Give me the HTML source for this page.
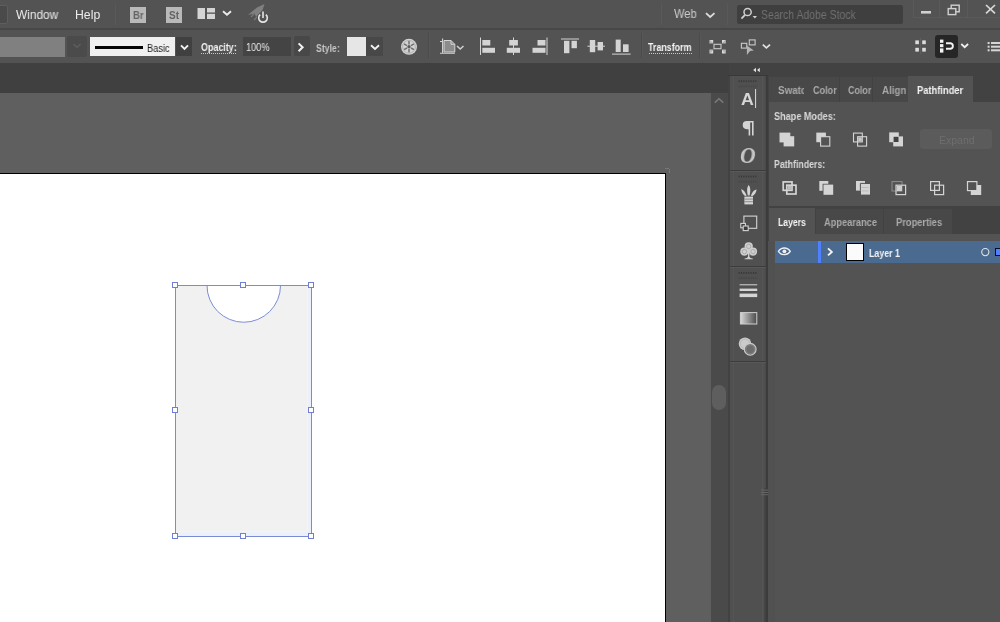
<!DOCTYPE html>
<html lang="en">
<head>
<meta charset="utf-8">
<title>Illustrator workspace</title>
<style>
html,body{margin:0;padding:0;}
body{width:1000px;height:622px;overflow:hidden;background:#535353;position:relative;
  font-family:"Liberation Sans",sans-serif;color:#ddd;}
.abs{position:absolute;}
.t{position:absolute;white-space:nowrap;line-height:1;transform-origin:0 0;will-change:transform;-webkit-font-smoothing:antialiased;}
#ico{position:absolute;left:0;top:0;width:1000px;height:622px;}
/* layout blocks */
#menubar{left:0;top:0;width:1000px;height:28px;background:#535353;}
#menusep{left:0;top:28px;width:1000px;height:2px;background:#474747;}
#ctrlbar{left:0;top:30px;width:1000px;height:33px;background:#535353;}
#darkstrip{left:0;top:63px;width:1000px;height:30px;background:#404040;}
#canvas{left:0;top:93px;width:711px;height:529px;background:#5f5f5f;}
#artboard{left:0;top:173px;width:665px;height:449px;background:#fff;border-top:1px solid #000;border-right:1px solid #000;box-sizing:content-box;}
#vscroll{left:711px;top:93px;width:18px;height:529px;background:#4a4a4a;}
#vthumb{left:712px;top:385px;width:14px;height:25px;background:#5e5e5e;border-radius:7px;}
#dockcol{left:729px;top:63px;width:271px;height:559px;background:#424242;}
#dock{left:729px;top:76px;width:38px;height:546px;background:#505050;}
#panelA{left:769px;top:76px;width:231px;height:130px;background:#535353;}
#panelB{left:769px;top:208px;width:231px;height:414px;background:#535353;}
</style>
</head>
<body>
<div class="abs" id="menubar"></div>
<div class="abs" id="menusep"></div>
<div class="abs" id="ctrlbar"></div>
<div class="abs" id="darkstrip"></div>
<div class="abs" id="canvas"></div>
<div class="abs" id="artboard"></div>
<div class="abs" id="vscroll"></div>
<div class="abs" id="vthumb"></div>
<div class="abs" id="dockcol"></div>
<div class="abs" id="dock"></div>
<div class="abs" id="panelA"></div>
<div class="abs" id="panelB"></div>

<!-- menu bar bits -->
<div class="abs" style="left:-10px;top:5px;width:16px;height:17px;background:#4a4a4a;border:1px solid #5e5e5e;border-radius:2px;"></div>
<div class="abs" style="left:115px;top:3px;width:1px;height:22px;background:#595959;"></div>
<div class="abs" style="left:130px;top:7px;width:16px;height:16px;background:#b9b9b9;"></div>
<div class="abs" style="left:166px;top:7px;width:16px;height:16px;background:#b9b9b9;"></div>
<div class="abs" style="left:661px;top:3px;width:1px;height:22px;background:#595959;"></div>
<div class="abs" style="left:727px;top:3px;width:1px;height:22px;background:#595959;"></div>
<div class="abs" style="left:737px;top:5px;width:166px;height:19px;background:#3f3f3f;border-radius:2px;"></div>
<!-- window buttons frame -->
<div class="abs" style="left:913px;top:-2px;width:90px;height:18px;border:1px solid #5a5a5a;"></div>
<div class="abs" style="left:939px;top:0;width:1px;height:17px;background:#5a5a5a;"></div>
<div class="abs" style="left:967px;top:0;width:1px;height:17px;background:#5a5a5a;"></div>
<!-- control bar bits -->
<div class="abs" style="left:0;top:37px;width:65px;height:20px;background:#808080;"></div>
<div class="abs" style="left:67px;top:36px;width:20px;height:21px;background:#4b4b4b;border-radius:2px;"></div>
<div class="abs" style="left:90px;top:37px;width:85px;height:19px;background:#f0f0f0;"></div>
<div class="abs" style="left:95px;top:45.5px;width:48px;height:3px;background:#050505;"></div>
<div class="abs" style="left:176px;top:37px;width:16px;height:19px;background:#404040;"></div>
<div class="abs" style="left:243px;top:37px;width:48px;height:19px;background:#444444;"></div>
<div class="abs" style="left:294px;top:36px;width:16px;height:20px;background:#484848;border-radius:2px;"></div>
<div class="abs" style="left:347px;top:37px;width:19px;height:19px;background:#e6e6e6;"></div>
<div class="abs" style="left:366px;top:37px;width:17px;height:19px;background:#484848;"></div>
<div class="abs" style="left:428px;top:33px;width:1px;height:25px;background:#4b4b4b;"></div>
<div class="abs" style="left:429px;top:33px;width:1px;height:25px;background:#575757;"></div>
<div class="abs" style="left:641px;top:33px;width:1px;height:25px;background:#4b4b4b;"></div>
<div class="abs" style="left:642px;top:33px;width:1px;height:25px;background:#575757;"></div>
<div class="abs" style="left:699px;top:33px;width:1px;height:25px;background:#4b4b4b;"></div>
<div class="abs" style="left:700px;top:33px;width:1px;height:25px;background:#575757;"></div>
<div class="abs" style="left:935px;top:35px;width:23px;height:22.5px;background:#262626;border-radius:3px;"></div>
<!-- dock -->
<div class="abs" style="left:728px;top:75px;width:40px;height:1px;background:#383838;"></div>
<div class="abs" style="left:728px;top:76px;width:1.5px;height:546px;background:#424242;"></div><div class="abs" style="left:732.5px;top:76px;width:1px;height:546px;background:#555555;"></div><div class="abs" style="left:761.5px;top:76px;width:1px;height:546px;background:#555555;"></div>
<div class="abs" style="left:765px;top:76px;width:1px;height:546px;background:#4a4a4a;"></div>
<div class="abs" style="left:766px;top:76px;width:2px;height:546px;background:#3c3c3c;"></div>
<div class="abs" style="left:730px;top:170px;width:36px;height:1px;background:#3c3c3c;"></div>
<div class="abs" style="left:730px;top:171px;width:36px;height:1px;background:#585858;"></div>
<div class="abs" style="left:730px;top:266px;width:36px;height:1px;background:#3c3c3c;"></div>
<div class="abs" style="left:730px;top:267px;width:36px;height:1px;background:#585858;"></div>
<div class="abs" style="left:730px;top:361px;width:36px;height:1px;background:#3c3c3c;"></div>
<div class="abs" style="left:730px;top:362px;width:36px;height:1px;background:#585858;"></div>
<!-- panel A tabs -->
<div class="abs" style="left:769px;top:76px;width:231px;height:26px;background:#424242;"></div>
<div class="abs" style="left:769px;top:77px;width:70px;height:25px;background:#484848;"></div>
<div class="abs" style="left:840px;top:77px;width:32px;height:25px;background:#484848;"></div>
<div class="abs" style="left:873px;top:77px;width:35px;height:25px;background:#484848;"></div>
<div class="abs" style="left:908px;top:76px;width:65px;height:27px;background:#535353;"></div>
<div class="abs" style="left:920px;top:129px;width:72px;height:20px;background:#5b5b5b;border-radius:3px;"></div>
<!-- panel B tabs -->
<div class="abs" style="left:769px;top:208px;width:231px;height:26px;background:#424242;"></div>
<div class="abs" style="left:769px;top:208px;width:46px;height:27px;background:#535353;"></div>
<div class="abs" style="left:816px;top:209px;width:67px;height:25px;background:#484848;"></div>
<div class="abs" style="left:884px;top:209px;width:68px;height:25px;background:#484848;"></div>
<div class="abs" style="left:768px;top:241px;width:7px;height:381px;background:#515151;"></div>
<!-- layer row -->
<div class="abs" style="left:775px;top:241px;width:225px;height:22px;background:#4a6a8f;"></div>
<div class="abs" style="left:817.5px;top:241px;width:3px;height:22px;background:#4f80ff;"></div>
<div class="abs" style="left:846px;top:243px;width:16px;height:16px;background:#fbfbfb;border:1px solid #000;"></div>
<div class="abs" style="left:994.5px;top:248px;width:8px;height:6px;background:#4f80ff;border:1px solid #0a0a2a;"></div>
<!--BLOCKS-->
<svg id="ico" viewBox="0 0 1000 622" width="1000" height="622">

<!-- ===== canvas shape ===== -->
<path d="M176 286 H207 A36.75 36.75 0 0 0 280.5 286 H307.5 V531.5 H176 Z" fill="#f1f1f1"/>
<rect x="307.5" y="286" width="3.5" height="250" fill="#ecf0fa"/>
<rect x="176" y="531.5" width="135" height="4.5" fill="#ecf0fa"/>
<path d="M207 285.5 A36.75 36.75 0 0 0 280.5 285.5" fill="none" stroke="#7b8ad4" stroke-width="1"/>
<rect x="175.5" y="285.5" width="136" height="251" fill="none" stroke="#7b8ad4" stroke-width="1"/>
<g fill="#fff" stroke="#6f80d4" stroke-width="1">
<rect x="172.5" y="282.5" width="5" height="5"/><rect x="240.5" y="282.5" width="5" height="5"/><rect x="308.5" y="282.5" width="5" height="5"/>
<rect x="172.5" y="407.5" width="5" height="5"/><rect x="308.5" y="407.5" width="5" height="5"/>
<rect x="172.5" y="533.5" width="5" height="5"/><rect x="240.5" y="533.5" width="5" height="5"/><rect x="308.5" y="533.5" width="5" height="5"/>
</g>
<!-- artboard corner tick -->
<path d="M665 168.5 h4 M669.5 169 v4" stroke="#777" stroke-width="1" fill="none"/>

<!-- ===== menu bar icons ===== -->
<g fill="#d4d4d4">
<rect x="197.5" y="8" width="7.5" height="11"/><rect x="207" y="8" width="8" height="4.5"/><rect x="207" y="13.8" width="8" height="5.2"/>
</g>
<polyline points="223,11.3 227,14.8 231,11.3" fill="none" stroke="#ececec" stroke-width="1.9"/>
<!-- gpu rocket -->
<path d="M248 15 L257 7.5 L264.5 4 L262.5 10 L256 17 L254.5 13.5 Z" fill="#808080"/>
<path d="M251 17 l3 -3 M254 20 l3 -3" stroke="#7a7a7a" stroke-width="1.2"/>
<circle cx="263" cy="18" r="5.6" fill="#535353"/>
<path d="M260.2 14.6 A4.3 4.3 0 1 0 265.8 14.6" fill="none" stroke="#e6e6e6" stroke-width="1.6"/>
<line x1="263" y1="11.5" x2="263" y2="18" stroke="#e6e6e6" stroke-width="1.6"/>
<!-- web chevron -->
<polyline points="706,13.2 710.2,17 714.5,13.2" fill="none" stroke="#dcdcdc" stroke-width="1.8"/>
<!-- search magnifier -->
<circle cx="747.6" cy="12" r="3.6" fill="none" stroke="#d0d0d0" stroke-width="1.5"/>
<line x1="745" y1="14.8" x2="741.5" y2="18.6" stroke="#d0d0d0" stroke-width="1.8"/>
<path d="M752.6 16 h4.4 l-2.2 2.4 z" fill="#d0d0d0"/>
<!-- window controls -->
<rect x="921" y="11" width="10" height="2.6" fill="#d0d0d0"/>
<rect x="951.2" y="5.2" width="8" height="6.6" fill="none" stroke="#d0d0d0" stroke-width="1.4"/>
<rect x="948.2" y="8.6" width="7.6" height="6" fill="#535353" stroke="#d0d0d0" stroke-width="1.4"/>
<path d="M986 5 l9 8.4 M995 5 l-9 8.4" stroke="#d8d8d8" stroke-width="1.7"/>

<!-- ===== control bar icons ===== -->
<polyline points="73.5,44 77,47.3 80.5,44" fill="none" stroke="#5c5c5c" stroke-width="1.6"/>
<polyline points="181,45.4 184.5,48.9 188,45.4" fill="none" stroke="#f2f2f2" stroke-width="1.9"/>
<polyline points="298.6,43.4 302.6,47.3 298.6,51.2" fill="none" stroke="#f2f2f2" stroke-width="2"/>
<polyline points="371,45.3 375,48.9 379,45.3" fill="none" stroke="#f2f2f2" stroke-width="1.9"/>
<!-- recolor wheel -->
<circle cx="409" cy="46.8" r="8" fill="#d2d2d2"/>
<g stroke="#707070" stroke-width="1.5">
<line x1="409" y1="41" x2="409" y2="44.5"/><line x1="409" y1="49" x2="409" y2="52.6"/>
<line x1="404" y1="43.9" x2="407" y2="45.6"/><line x1="411" y1="48" x2="414" y2="49.7"/>
<line x1="404" y1="49.7" x2="407" y2="48"/><line x1="411" y1="45.6" x2="414" y2="43.9"/>
</g>
<circle cx="409" cy="46.8" r="1.7" fill="#5a5a5a"/>
<circle cx="409" cy="46.8" r="6.4" fill="none" stroke="#a8a8a8" stroke-width="0.8"/>
<!-- document setup -->
<path d="M442.6 38.4 V53.2 M440 53.2 H455 M440 41.5 H442.5" stroke="#d4d4d4" stroke-width="1.1" fill="none"/>
<path d="M444 40.5 H451 L454.8 44.3 V52 H444 Z" fill="#8c8c8c" stroke="#d4d4d4" stroke-width="1"/>
<path d="M451 40.5 V44.3 H454.8" fill="none" stroke="#d4d4d4" stroke-width="1"/>
<polyline points="457,46 460.2,49 463.5,46" fill="none" stroke="#cfcfcf" stroke-width="1.6"/>
<!-- align icons -->
<g fill="#d4d4d4">
<rect x="480" y="37.5" width="1" height="17.5"/><rect x="482.3" y="40" width="8" height="5.5"/><rect x="482.3" y="47.8" width="12.7" height="5"/>
<rect x="513" y="37.5" width="1" height="17.5"/><rect x="509.2" y="40" width="8.7" height="5.5"/><rect x="506.8" y="47.8" width="13.2" height="5"/>
<rect x="546.5" y="37.5" width="1" height="17.5"/><rect x="537.5" y="40" width="8" height="5.5"/><rect x="532.5" y="47.8" width="13" height="5"/>
<rect x="561" y="38.5" width="18" height="1"/><rect x="564" y="40.8" width="5.4" height="12.4"/><rect x="571.5" y="40.8" width="5.4" height="7.4"/>
<rect x="587.4" y="45.7" width="17.6" height="1"/><rect x="589.8" y="40" width="5.4" height="12.2"/><rect x="597.6" y="42" width="5.4" height="8.4"/>
<rect x="612" y="53.6" width="18.6" height="1"/><rect x="615.7" y="39.6" width="5" height="12.4"/><rect x="623" y="44.3" width="5.6" height="7.7"/>
</g>
<!-- isolate icon -->
<rect x="714" y="44.3" width="7" height="4.4" fill="none" stroke="#cacaca" stroke-width="1.1"/>
<g fill="#dadada">
<path d="M709.4 40 h3.8 v3.6 z"/><path d="M725.8 40 h-3.8 v3.6 z"/>
<path d="M709.4 53.4 h3.8 v-3.8 z"/><path d="M725.8 53.4 h-3.8 v-3.8 z"/>
<path d="M709.4 40 v3.6 h3.8 z" opacity=".75"/><path d="M725.8 40 v3.6 h-3.8 z" opacity=".75"/>
<path d="M709.4 53.4 v-3.8 h3.8 z" opacity=".75"/><path d="M725.8 53.4 v-3.8 h-3.8 z" opacity=".75"/>
</g>
<!-- select similar -->
<rect x="741.4" y="43.3" width="5.4" height="4.8" fill="none" stroke="#cacaca" stroke-width="1.1"/>
<rect x="749.3" y="39.9" width="5.8" height="5" fill="none" stroke="#cacaca" stroke-width="1.1"/>
<path d="M746.9 45.4 L753.8 50.4 L750 51 L746.9 55 Z" fill="#b4b4b4"/>
<polyline points="762.8,44.6 766.4,47.8 770,44.6" fill="none" stroke="#e0e0e0" stroke-width="1.8"/>
<!-- grid icon -->
<g fill="#dcdcdc"><rect x="915.3" y="40.4" width="3.6" height="3.8"/><rect x="922.2" y="40.4" width="3.6" height="3.8"/>
<rect x="915.3" y="47.8" width="3.6" height="3.8"/><rect x="922.2" y="47.8" width="3.6" height="3.8"/></g>
<rect x="920" y="38" width="1" height="16" fill="#5e5e5e"/>
<!-- snap button contents -->
<g fill="#f4f4f4"><rect x="940" y="39.6" width="3.4" height="3.2"/><rect x="940" y="44.1" width="3.4" height="3.1"/><rect x="940" y="48.4" width="3.4" height="4.2"/></g>
<path d="M946 43.3 H950.6 A2.8 2.8 0 0 1 950.6 48.8 H946" fill="none" stroke="#f4f4f4" stroke-width="1.9"/>
<polyline points="961.3,44 964.7,47.2 968.1,44" fill="none" stroke="#f0f0f0" stroke-width="1.8"/>
<!-- list icon -->
<g fill="#d6d6d6"><rect x="987.6" y="42" width="2" height="2"/><rect x="987.6" y="45.7" width="2" height="2"/><rect x="987.6" y="49.3" width="2" height="2"/>
<rect x="991" y="42" width="9" height="2"/><rect x="991" y="45.7" width="9" height="2"/><rect x="991" y="49.3" width="9" height="2"/></g>

<!-- ===== scrollbar arrow ===== -->
<polyline points="714.8,102.6 719,98.8 723.2,102.6" fill="none" stroke="#7a7a7a" stroke-width="1.5"/>
<!-- collapse arrows -->
<path d="M756 67.8 v4.4 l-2.8 -2.2 z M759.8 67.8 v4.4 l-2.8 -2.2 z" fill="#e0e0e0"/>

<!-- ===== dock ===== -->

<rect x="738.5" y="80.3" width="1.2" height="1.8" fill="#383838"/><rect x="740.9" y="80.3" width="1.2" height="1.8" fill="#383838"/><rect x="743.3" y="80.3" width="1.2" height="1.8" fill="#383838"/><rect x="745.7" y="80.3" width="1.2" height="1.8" fill="#383838"/><rect x="748.1" y="80.3" width="1.2" height="1.8" fill="#383838"/><rect x="750.5" y="80.3" width="1.2" height="1.8" fill="#383838"/><rect x="752.9" y="80.3" width="1.2" height="1.8" fill="#383838"/><rect x="755.3" y="80.3" width="1.2" height="1.8" fill="#383838"/><rect x="738.5" y="85.5" width="1.2" height="1.8" fill="#464646"/><rect x="740.9" y="85.5" width="1.2" height="1.8" fill="#464646"/><rect x="743.3" y="85.5" width="1.2" height="1.8" fill="#464646"/><rect x="745.7" y="85.5" width="1.2" height="1.8" fill="#464646"/><rect x="748.1" y="85.5" width="1.2" height="1.8" fill="#464646"/><rect x="750.5" y="85.5" width="1.2" height="1.8" fill="#464646"/><rect x="752.9" y="85.5" width="1.2" height="1.8" fill="#464646"/><rect x="755.3" y="85.5" width="1.2" height="1.8" fill="#464646"/><rect x="738.5" y="175.6" width="1.2" height="1.8" fill="#383838"/><rect x="740.9" y="175.6" width="1.2" height="1.8" fill="#383838"/><rect x="743.3" y="175.6" width="1.2" height="1.8" fill="#383838"/><rect x="745.7" y="175.6" width="1.2" height="1.8" fill="#383838"/><rect x="748.1" y="175.6" width="1.2" height="1.8" fill="#383838"/><rect x="750.5" y="175.6" width="1.2" height="1.8" fill="#383838"/><rect x="752.9" y="175.6" width="1.2" height="1.8" fill="#383838"/><rect x="755.3" y="175.6" width="1.2" height="1.8" fill="#383838"/><rect x="738.5" y="180.8" width="1.2" height="1.8" fill="#464646"/><rect x="740.9" y="180.8" width="1.2" height="1.8" fill="#464646"/><rect x="743.3" y="180.8" width="1.2" height="1.8" fill="#464646"/><rect x="745.7" y="180.8" width="1.2" height="1.8" fill="#464646"/><rect x="748.1" y="180.8" width="1.2" height="1.8" fill="#464646"/><rect x="750.5" y="180.8" width="1.2" height="1.8" fill="#464646"/><rect x="752.9" y="180.8" width="1.2" height="1.8" fill="#464646"/><rect x="755.3" y="180.8" width="1.2" height="1.8" fill="#464646"/><rect x="738.5" y="272.0" width="1.2" height="1.8" fill="#383838"/><rect x="740.9" y="272.0" width="1.2" height="1.8" fill="#383838"/><rect x="743.3" y="272.0" width="1.2" height="1.8" fill="#383838"/><rect x="745.7" y="272.0" width="1.2" height="1.8" fill="#383838"/><rect x="748.1" y="272.0" width="1.2" height="1.8" fill="#383838"/><rect x="750.5" y="272.0" width="1.2" height="1.8" fill="#383838"/><rect x="752.9" y="272.0" width="1.2" height="1.8" fill="#383838"/><rect x="755.3" y="272.0" width="1.2" height="1.8" fill="#383838"/><rect x="738.5" y="277.2" width="1.2" height="1.8" fill="#464646"/><rect x="740.9" y="277.2" width="1.2" height="1.8" fill="#464646"/><rect x="743.3" y="277.2" width="1.2" height="1.8" fill="#464646"/><rect x="745.7" y="277.2" width="1.2" height="1.8" fill="#464646"/><rect x="748.1" y="277.2" width="1.2" height="1.8" fill="#464646"/><rect x="750.5" y="277.2" width="1.2" height="1.8" fill="#464646"/><rect x="752.9" y="277.2" width="1.2" height="1.8" fill="#464646"/><rect x="755.3" y="277.2" width="1.2" height="1.8" fill="#464646"/>
<!-- A| character icon (real text is added in html); cursor bar -->
<rect x="755" y="89" width="1.1" height="19" fill="#cfcfcf"/>
<!-- paragraph icon -->
<path d="M746.8 121 H753.6 V135.4 H752 V122.6 H750.2 V135.4 H748.6 V129.2 H746.8 A4.1 4.1 0 0 1 746.8 121 Z" fill="#d4d4d4"/>
<!-- brushes icon -->
<g fill="#d4d4d4">
<path d="M744.4 196.6 H753 V204.4 H744.4 Z"/>
<path d="M748.7 185 C750.6 187.5 750.6 190.5 749.6 195.6 H747.8 C746.8 190.5 746.8 187.5 748.7 185 Z"/>
<path d="M741.2 189 C743.6 190 745.6 192.6 746.6 195.8 L745 196 C743.2 194.6 741.6 192.4 741.2 189 Z"/>
<path d="M756.6 189.4 C754.4 189.6 752 191.8 750.8 195.8 L752.4 196 C754.6 194.8 756.2 192.8 756.6 189.4 Z"/>
</g>
<rect x="744.4" y="198.6" width="8.6" height="1" fill="#8a8a8a"/><rect x="744.4" y="201.2" width="8.6" height="1" fill="#8a8a8a"/>
<!-- symbols / artboards icon -->
<rect x="743.9" y="216.1" width="12.8" height="12.2" fill="none" stroke="#d4d4d4" stroke-width="1.1"/>
<rect x="740.8" y="223.4" width="4.6" height="4.4" fill="#3a3a3a" stroke="#d4d4d4" stroke-width="1.1"/>
<rect x="743.2" y="226" width="5" height="4.6" fill="#3a3a3a" stroke="#d4d4d4" stroke-width="1.1"/>
<!-- club icon -->
<g fill="#cfcfcf"><circle cx="748.7" cy="246.4" r="4.1"/><circle cx="744.4" cy="251.6" r="4.1"/><circle cx="753" cy="251.6" r="4.1"/>
<path d="M748 250 h1.4 v6.4 c.4 1.2 1.6 1.8 3.4 2 v.8 h-8.2 v-.8 c1.8 -.2 3 -.8 3.4 -2 z"/></g>
<g fill="none" stroke="#9c9c9c" stroke-width=".7"><circle cx="748.7" cy="246.4" r="2.2"/><circle cx="744.4" cy="251.6" r="2.2"/><circle cx="753" cy="251.6" r="2.2"/></g>
<!-- stroke icon -->
<g fill="#d4d4d4"><rect x="739.6" y="284.3" width="17.6" height="1"/><rect x="739.6" y="288.6" width="17.6" height="2.4"/><rect x="739.6" y="293.6" width="17.6" height="3.5"/></g>
<!-- gradient icon -->
<defs><linearGradient id="gr" x1="0" x2="1" y1="0" y2="0"><stop offset="0" stop-color="#d8d8d8"/><stop offset="1" stop-color="#4a4a4a"/></linearGradient></defs>
<rect x="740.4" y="312.6" width="16.4" height="11.4" fill="url(#gr)" stroke="#cfcfcf" stroke-width="1"/>
<!-- transparency icon -->
<circle cx="745" cy="343.7" r="6.3" fill="#cbcbcb"/>
<circle cx="745" cy="343.7" r="4.6" fill="none" stroke="#b4b4b4" stroke-width=".8"/>
<circle cx="750.2" cy="349.3" r="5.9" fill="#7c7c7c" stroke="#cbcbcb" stroke-width="1.1"/>
<circle cx="750.2" cy="349.3" r="3.6" fill="#6c6c6c"/>
<!-- dock lower splitter ticks -->
<rect x="764.4" y="488" width="1.6" height="134" fill="#424242"/>
<rect x="761" y="489.6" width="7" height="1" fill="#666"/><rect x="761" y="492" width="7" height="1" fill="#666"/><rect x="761" y="494.2" width="7" height="1" fill="#666"/>

<!-- ===== Pathfinder: shape modes ===== -->
<g fill="#d4d4d4">
<rect x="779.5" y="132.6" width="10.8" height="9.8"/><rect x="783.6" y="136.2" width="10.6" height="10.2"/>
<rect x="816.3" y="132.6" width="9.6" height="9.6"/>
</g>

<rect x="820.6" y="136.7" width="9.2" height="9.4" fill="#535353" stroke="#d4d4d4" stroke-width="1.1"/>
<rect x="853.5" y="133.1" width="8.8" height="8.8" fill="none" stroke="#d4d4d4" stroke-width="1.1"/>
<rect x="857.6" y="136.7" width="9" height="9.4" fill="none" stroke="#d4d4d4" stroke-width="1.1"/>
<rect x="858.2" y="137.3" width="3.6" height="4.1" fill="#c8c8c8"/>
<g fill="#d4d4d4"><rect x="889.2" y="132.4" width="9.6" height="9.8"/><rect x="893.2" y="136.4" width="9.8" height="10"/></g>
<rect x="893.6" y="136.8" width="4.9" height="5.2" fill="#414141"/>
<!-- Pathfinder: pathfinders -->
<rect x="783.2" y="181.9" width="8.8" height="8.4" fill="none" stroke="#d4d4d4" stroke-width="1.7"/>
<rect x="786.8" y="185.2" width="9.2" height="8.8" fill="none" stroke="#d4d4d4" stroke-width="1.7"/>
<rect x="787.8" y="186" width="4" height="3.8" fill="#bdbdbd"/>
<g fill="#d4d4d4"><rect x="819.3" y="181" width="9" height="9.8"/></g>
<rect x="822.6" y="183.8" width="11.2" height="11.6" fill="#535353"/>
<rect x="823.5" y="184.6" width="9.7" height="10.2" fill="#d4d4d4"/>
<g fill="#d4d4d4"><rect x="856" y="181" width="9" height="9.6"/><rect x="861" y="184" width="9" height="10.6"/></g>
<path d="M860.4 190.6 V183.4 H865.2" fill="none" stroke="#535353" stroke-width="1"/>
<rect x="861.6" y="187" width="7" height="1" fill="#bcbcbc"/><rect x="861.6" y="190.4" width="7" height="1" fill="#bcbcbc"/>
<rect x="892" y="181.6" width="10" height="9.4" fill="none" stroke="#8e8e8e" stroke-width="1"/>
<rect x="896" y="185.2" width="9.6" height="9.4" fill="none" stroke="#d4d4d4" stroke-width="1.2"/>
<rect x="896.7" y="185.9" width="5.3" height="5.2" fill="#cfcfcf"/>
<rect x="930.6" y="181.6" width="8.8" height="8.8" fill="none" stroke="#d4d4d4" stroke-width="1.2"/>
<rect x="934.6" y="185.2" width="9" height="9.4" fill="none" stroke="#d4d4d4" stroke-width="1.2"/>
<rect x="970.8" y="185" width="10.4" height="10" fill="#d4d4d4"/>
<rect x="967.5" y="181.6" width="9.4" height="9" fill="#535353" stroke="#d4d4d4" stroke-width="1.2"/>

<!-- ===== layer row ===== -->
<path d="M778.4 251.3 C781.2 246.9 787.4 246.9 790.3 251.3 C787.4 255.7 781.2 255.7 778.4 251.3 Z" fill="none" stroke="#f0f0f0" stroke-width="1.3"/>
<circle cx="784.4" cy="251.3" r="1.9" fill="#f0f0f0"/>
<polyline points="828,248.4 831.8,251.9 828,255.4" fill="none" stroke="#f4f4f4" stroke-width="1.9"/>
<circle cx="985.3" cy="252.1" r="3.6" fill="none" stroke="#e4e4e4" stroke-width="1.1"/>
<!--ICONS-->
</svg>
<!--TEXT-START-->
<span class="t" style="left:16.3px;top:8.75px;font-size:12px;font-weight:400;color:#ececec;transform:scaleX(0.988);">Window</span>
<span class="t" style="left:75.28px;top:8.75px;font-size:12px;font-weight:400;color:#ececec;transform:scaleX(1.021);">Help</span>
<span class="t" style="left:133.2px;top:11.1px;font-size:10px;font-weight:700;color:#636363;transform:scaleX(0.945);">Br</span>
<span class="t" style="left:169.4px;top:11.1px;font-size:10px;font-weight:700;color:#636363;transform:scaleX(0.98);">St</span>
<span class="t" style="left:673.5px;top:8.4px;font-size:12px;font-weight:400;color:#cccccc;transform:scaleX(0.929);">Web</span>
<span class="t" style="left:760.53px;top:9.05px;font-size:12px;font-weight:400;color:#707070;transform:scaleX(0.871);">Search Adobe Stock</span>
<span class="t" style="left:147.38px;top:43.95px;font-size:10px;font-weight:400;color:#1c1c1c;transform:scaleX(0.922);">Basic</span>
<span class="t" style="left:200.5px;top:42.9px;font-size:10px;font-weight:700;color:#f2f2f2;transform:scaleX(0.892);">Opacity:</span>
<span class="t" style="left:246.08px;top:43.15px;font-size:10px;font-weight:400;color:#e8e8e8;transform:scaleX(0.92);">100%</span>
<span class="t" style="left:316.3px;top:43.65px;font-size:10px;font-weight:700;color:#c6c6c6;transform:scaleX(0.87);">Style:</span>
<span class="t" style="left:648.4px;top:42.9px;font-size:10px;font-weight:700;color:#f6f6f6;transform:scaleX(0.888);">Transform</span>
<div class="abs" style="left:776px;top:80px;width:27.6px;height:20px;overflow:hidden;"><span class="t" style="left:2.10px;top:5.75px;font-size:10px;font-weight:700;color:#a9a9a9;transform:scaleX(0.979);">Swatches</span></div>
<span class="t" style="left:812.5px;top:85.75px;font-size:10px;font-weight:700;color:#a9a9a9;transform:scaleX(0.908);">Color</span>
<span class="t" style="left:847.9px;top:85.75px;font-size:10px;font-weight:700;color:#a9a9a9;transform:scaleX(0.892);">Color</span>
<span class="t" style="left:881.7px;top:85.75px;font-size:10px;font-weight:700;color:#a9a9a9;transform:scaleX(0.972);">Align</span>
<span class="t" style="left:917.0px;top:85.5px;font-size:10px;font-weight:700;color:#f4f4f4;transform:scaleX(0.932);">Pathfinder</span>
<span class="t" style="left:773.7px;top:112.1px;font-size:10px;font-weight:700;color:#d8d8d8;transform:scaleX(0.912);">Shape Modes:</span>
<span class="t" style="left:774.2px;top:160.35px;font-size:10px;font-weight:700;color:#d8d8d8;transform:scaleX(0.878);">Pathfinders:</span>
<span class="t" style="left:939.45px;top:135.7px;font-size:10px;font-weight:400;color:#6e6e6e;transform:scaleX(1.048);">Expand</span>
<span class="t" style="left:778.2px;top:218.15px;font-size:10px;font-weight:700;color:#f4f4f4;transform:scaleX(0.862);">Layers</span>
<span class="t" style="left:823.7px;top:218.15px;font-size:10px;font-weight:700;color:#a9a9a9;transform:scaleX(0.925);">Appearance</span>
<span class="t" style="left:895.9px;top:218.15px;font-size:10px;font-weight:700;color:#a9a9a9;transform:scaleX(0.932);">Properties</span>
<span class="t" style="left:868.9px;top:248.5px;font-size:10px;font-weight:700;color:#f4f4f4;transform:scaleX(0.883);">Layer 1</span>
<span class="t" style="left:741.2px;top:91.1px;font-size:17px;font-weight:700;color:#d6d6d6;transform:scaleX(1.042);">A</span>
<span class="t" style="left:740.26px;top:143.6px;font-size:23px;font-weight:700;color:#c6c6c6;transform:scaleX(0.94);font-family:'Liberation Serif',serif;font-style:italic;">O</span>
<div class="abs" style="left:200.5px;top:53px;width:36px;height:1px;background:repeating-linear-gradient(90deg,#c8c8c8 0 1px,transparent 1px 2px);"></div>
<div class="abs" style="left:648.5px;top:53px;width:43.5px;height:1px;background:repeating-linear-gradient(90deg,#c8c8c8 0 1px,transparent 1px 2px);"></div>
<!--TEXT-END-->
</body>
</html>
